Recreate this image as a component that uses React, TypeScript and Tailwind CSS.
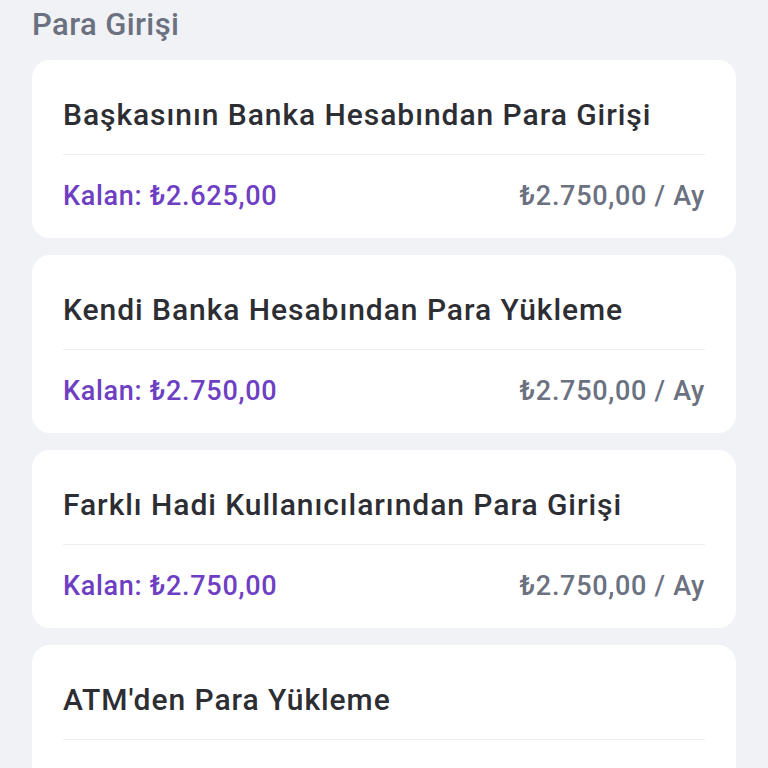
import React from 'react';

const items = [
  { title: 'Başkasının Banka Hesabından Para Girişi', left: '₺2.625,00', limit: '₺2.750,00' },
  { title: 'Kendi Banka Hesabından Para Yükleme', left: '₺2.750,00', limit: '₺2.750,00' },
  { title: 'Farklı Hadi Kullanıcılarından Para Girişi', left: '₺2.750,00', limit: '₺2.750,00' },
  { title: "ATM'den Para Yükleme", left: '₺2.750,00', limit: '₺2.750,00' },
];

export default function App() {
  return (
    <div className="h-[768px] overflow-hidden bg-[#f1f2f5] px-8 pt-[5px] font-['Roboto',sans-serif]">
      <h2 className="text-[31px] leading-[40px] font-medium tracking-[0.4px] text-[#6b7180]">Para Girişi</h2>
      <div className="mt-[15px] flex flex-col gap-[17px]">
        {items.map(item => (
          <div key={item.title} className="rounded-[18px] bg-white px-[31px] pt-[37px] pb-[26px]">
            <p className="text-[30px] leading-[36px] font-medium tracking-[0.95px] text-[#2d2e33] whitespace-nowrap">{item.title}</p>
            <div className="mt-[21px] h-px bg-[#eceef1]" />
            <div className="mt-[25px] flex items-center justify-between text-[27px] leading-[32px] font-medium tracking-[0.7px]">
              <span className="text-[#6e3fc3]">Kalan: {item.left}</span>
              <span className="text-[#6b7180]">{item.limit} / Ay</span>
            </div>
          </div>
        ))}
      </div>
    </div>
  );
}
